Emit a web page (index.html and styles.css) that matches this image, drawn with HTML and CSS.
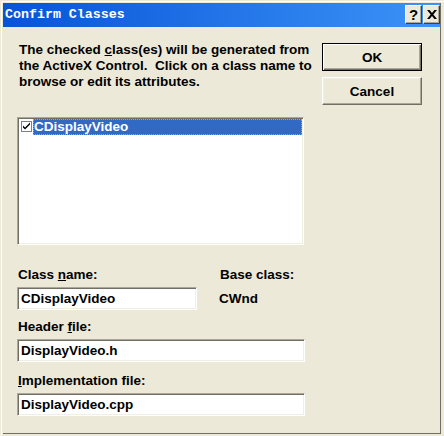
FILE: index.html
```html
<!DOCTYPE html>
<html>
<head>
<meta charset="utf-8">
<link rel="stylesheet" href="styles.css">
</head>
<body>
<div class="window">
  <div class="frame">
    <div class="titlebar">
      <span class="title">Confirm Classes</span>
      <div class="tbtns">
        <span class="tbtn help">?</span>
        <span class="tbtn close"><svg width="10" height="9" viewBox="0 0 10 9"><path d="M0 0h2.6l2.4 2.9L7.4 0H10L6.3 4.5 10 9H7.4L5 6.1 2.6 9H0l3.7-4.5z" fill="#000"/></svg></span>
      </div>
    </div>
    <div class="client">
      <div class="main">
        <p class="intro">The checked <u>c</u>lass(es) will be generated from<br>the ActiveX Control.&nbsp; Click on a class name to<br>browse or edit its attributes.</p>
        <div class="listbox">
          <div class="item">
            <span class="check"><svg width="9" height="9" viewBox="0 0 9 9"><path d="M1 3.5l2 2 5-5v2l-5 5-2-2z" fill="#000"/></svg></span>
            <span class="itemtext">CDisplayVideo</span>
          </div>
        </div>
        <div class="pair labels">
          <span class="lbl namecol">Class <u>n</u>ame:</span>
          <span class="lbl">Base class:</span>
        </div>
        <div class="pair">
          <div class="field short">CDisplayVideo</div>
          <span class="value">CWnd</span>
        </div>
        <div class="lbl gap1">Header <u>f</u>ile:</div>
        <div class="field">DisplayVideo.h</div>
        <div class="lbl gap2"><u>I</u>mplementation file:</div>
        <div class="field">DisplayVideo.cpp</div>
      </div>
      <div class="side">
        <button class="btn default">OK</button>
        <button class="btn">Cancel</button>
      </div>
    </div>
  </div>
</div>
</body>
</html>
```
FILE: styles.css
```css
html, body {
  margin: 0;
  padding: 0;
  background: #ece9d8;
}
.window {
  width: 444px;
  height: 436px;
  box-sizing: border-box;
  padding: 3px 0 0 3px;
  background: #ece9d8;
  box-shadow: inset 1px 1px #ece9d8, inset 2px 2px #ffffff;
  font-family: "Liberation Sans", Arial, sans-serif;
  font-weight: bold;
  font-size: 13.5px;
  color: #000;
}
.frame {
  width: 438px;
  height: 431px;
  box-sizing: border-box;
  border-right: 1px solid #716f64;
  border-bottom: 1px solid #716f64;
  display: flex;
  flex-direction: column;
}
.titlebar {
  height: 24px;
  background: linear-gradient(to right, #0654d8 0%, #2577e9 55%, #3c93f7 100%);
  display: flex;
  align-items: flex-start;
  justify-content: space-between;
}
.title {
  font-family: "Liberation Mono", "DejaVu Sans Mono", monospace;
  font-weight: bold;
  font-size: 13.3px;
  color: #fff;
  line-height: 24px;
  padding-left: 2px;
}
.tbtns {
  display: flex;
  gap: 1px;
  margin-top: 2px;
}
.tbtn {
  width: 17px;
  height: 19px;
  box-sizing: border-box;
  background: #ece9d8;
  border-top: 1px solid #fff;
  border-left: 1px solid #fff;
  border-right: 1px solid #404040;
  border-bottom: 1px solid #404040;
  box-shadow: inset -1px -1px #aca899;
  display: flex;
  align-items: center;
  justify-content: center;
  font-family: "Liberation Sans", Arial, sans-serif;
  font-weight: bold;
  font-size: 15px;
  line-height: 1;
}
.client {
  display: flex;
  padding: 15px 0 0 14px;
}
.main {
  width: 288px;
  display: flex;
  flex-direction: column;
}
.intro {
  margin: 0;
  padding-left: 2px;
  line-height: 16px;
  white-space: nowrap;
}
.listbox {
  margin-top: 27px;
  width: 287px;
  height: 128px;
  box-sizing: border-box;
  background: #fff;
  border-top: 1px solid #aca899;
  border-left: 1px solid #aca899;
  border-right: 1px solid #fff;
  border-bottom: 1px solid #fff;
  box-shadow: inset 1px 1px #716f64, inset -1px -1px #f1efe2;
  padding: 1px;
}
.item {
  display: flex;
  height: 16px;
}
.check {
  width: 11px;
  height: 11px;
  box-sizing: border-box;
  margin: 2px 1px 0 2px;
  border: 1px solid #808080;
  background: #fff;
  display: flex;
  align-items: center;
  justify-content: center;
}
.itemtext {
  flex: 1;
  background: #316ac5;
  color: #fff;
  line-height: 16px;
  padding-left: 1px;
  outline: 1px dotted #d6a040;
  outline-offset: -1px;
}
.pair {
  display: flex;
  align-items: center;
}
.labels {
  margin-top: 22px;
}
.lbl {
  line-height: 16px;
  padding-left: 1px;
}
.namecol {
  width: 201px;
}
.pair .field {
  margin-top: 4px;
}
.value {
  margin-left: 22px;
  margin-top: 4px;
  line-height: 16px;
}
.field {
  width: 288px;
  height: 23px;
  box-sizing: border-box;
  background: #fff;
  border-top: 1px solid #aca899;
  border-left: 1px solid #aca899;
  border-right: 1px solid #fff;
  border-bottom: 1px solid #fff;
  box-shadow: inset 1px 1px #716f64, inset -1px -1px #f1efe2;
  padding-left: 3px;
  line-height: 21px;
}
.field.short {
  width: 180px;
}
.gap1 {
  margin-top: 9px;
  margin-bottom: 4px;
}
.gap2 {
  margin-top: 11px;
  margin-bottom: 4px;
}
.side {
  display: flex;
  flex-direction: column;
  gap: 6px;
  margin-left: 17px;
  padding-top: 1px;
}
.btn {
  width: 100px;
  height: 28px;
  box-sizing: border-box;
  margin: 0;
  padding: 0;
  background: #ece9d8;
  font-family: "Liberation Sans", Arial, sans-serif;
  font-weight: bold;
  font-size: 13.5px;
  color: #000;
  border-top: 1px solid #fff;
  border-left: 1px solid #fff;
  border-right: 1px solid #716f64;
  border-bottom: 1px solid #716f64;
  box-shadow: inset -1px -1px #aca899, inset 1px 1px #f1efe2;
}
.btn.default {
  border: 1px solid #000;
  box-shadow: inset 1px 1px #fff, inset -1px -1px #716f64, inset -2px -2px #aca899;
}
```
